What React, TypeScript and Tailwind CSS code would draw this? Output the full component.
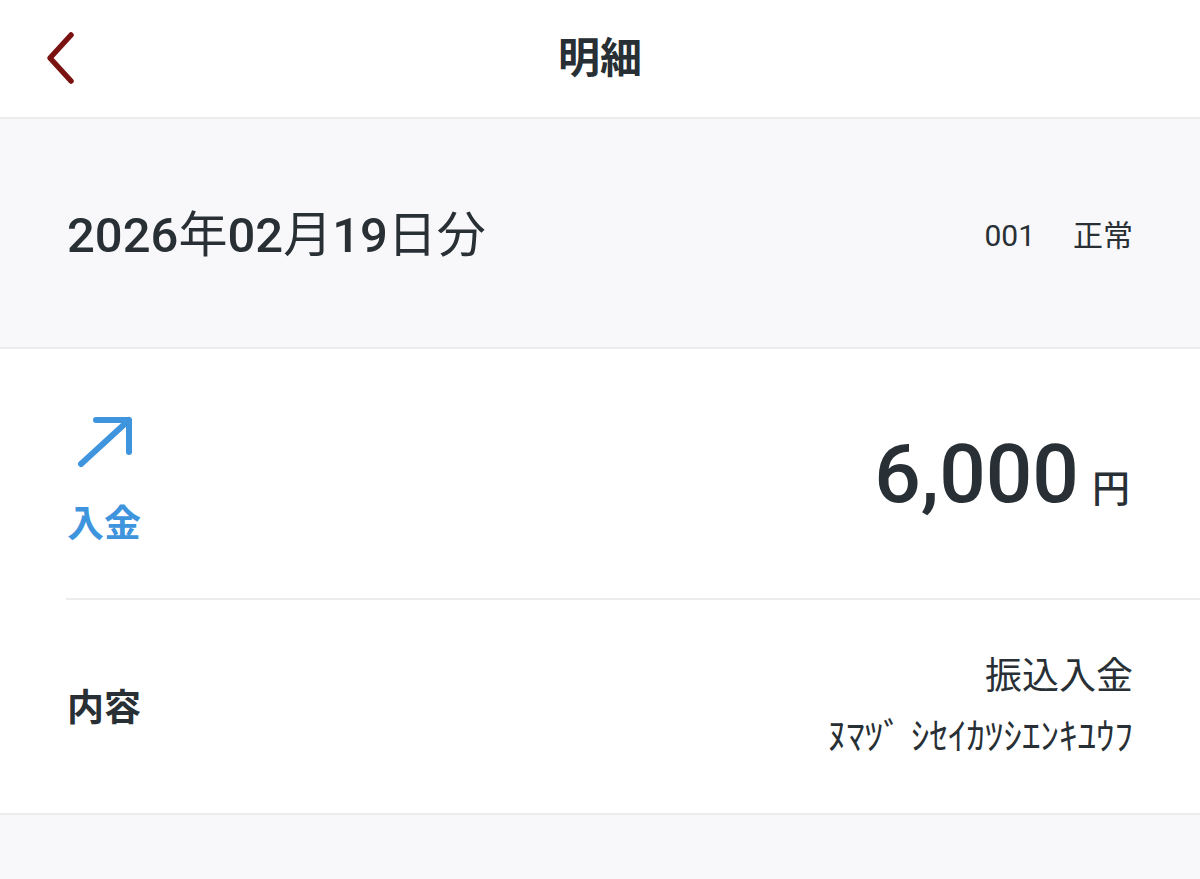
export default function App() {
  const font = { fontFamily: 'Roboto, "Noto Sans CJK JP", sans-serif' };
  return (
    <div className="min-h-[879px] bg-[#f8f8fa] text-[#283035]" style={font}>
      {/* Header */}
      <header className="relative h-[119px] flex items-center justify-center bg-white border-b-2 border-[#ececef]">
        <button className="absolute left-[40px] top-[30px] w-[40px] h-[56px] flex items-center justify-center">
          <svg width="34" height="54" viewBox="0 0 34 54" fill="none">
            <path d="M28 4 L7 27 L28 50" stroke="#7b1212" strokeWidth="5.5" strokeLinecap="round" strokeLinejoin="round" />
          </svg>
        </button>
        <h1 className="text-[42px] font-bold leading-none">明細</h1>
      </header>

      {/* Date */}
      <section className="h-[230px] flex items-center justify-between pl-[67px] pr-[67px] border-b-2 border-[#ececef]">
        <div className="text-[49px] font-medium leading-none pt-[4px]">
          2026<span className="font-normal">年</span>02<span className="font-normal">月</span>19<span className="font-normal">日分</span>
        </div>
        <div className="flex items-center gap-[38px] text-[30px] leading-none pt-[6px]">
          <span>001</span>
          <span>正常</span>
        </div>
      </section>

      {/* Detail card */}
      <section className="bg-white border-b-2 border-[#ececef]">
        <div className="h-[249px] flex items-center justify-between pl-[67px] pr-[70px]">
          <div className="flex flex-col items-start pt-[8px]">
            <svg width="62" height="58" viewBox="0 0 62 58" fill="none" className="ml-[8px]">
              <path d="M6 52 L54 8 M21 8 L54 8 L54 40" stroke="#3f94de" strokeWidth="6" strokeLinecap="round" strokeLinejoin="round" />
            </svg>
            <div className="mt-[36px] text-[37px] font-bold leading-none text-[#3f94de]">入金</div>
          </div>
          <div className="flex items-baseline">
            <span className="text-[82px] font-medium leading-none">6,000</span>
            <span className="ml-[13px] text-[38px] font-medium leading-none">円</span>
          </div>
        </div>
        <div className="ml-[66px] h-[2px] bg-[#ececef]" />
        <div className="h-[213px] flex items-center justify-between pl-[67px] pr-[67px]">
          <div className="text-[37px] font-bold leading-none pt-[4px]">内容</div>
          <div className="flex flex-col items-end">
            <div className="text-[37px] leading-none">振込入金</div>
            <div className="mt-[24px] text-[37px] leading-none">ﾇﾏﾂﾞ ｼｾｲｶﾂｼｴﾝｷﾕｳﾌ</div>
          </div>
        </div>
      </section>
    </div>
  );
}
